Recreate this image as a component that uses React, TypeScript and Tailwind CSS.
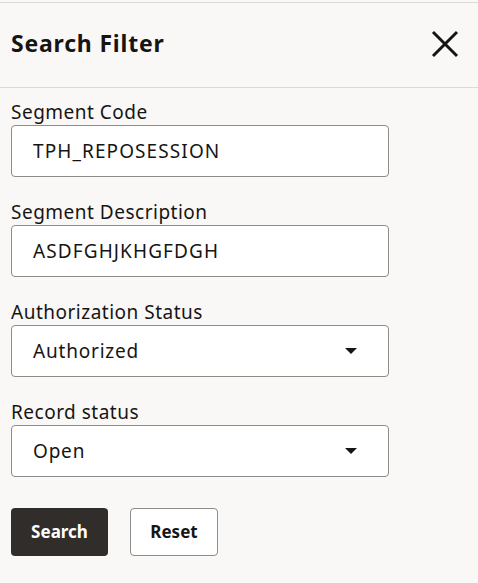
import React, { useState } from 'react';

const font = { fontFamily: '"Noto Sans", "Open Sans", sans-serif' };

const Caret = () => (
  <svg width="14" height="8" viewBox="0 0 14 8" className="text-[#161513]">
    <path d="M1 1h12L7 7z" fill="currentColor" />
  </svg>
);

const TextField: React.FC<{ label: string; value: string }> = ({ label, value }) => (
  <div className="flex flex-col">
    <label className="text-[19px] leading-[24px] tracking-[0.5px] text-[#161513]">{label}</label>
    <div className="mt-[1px] h-[52px] w-[378px] rounded-[4px] border border-[#8e8b88] bg-white flex items-center pl-[21px] text-[19px] tracking-[1.1px] text-[#161513]">
      {value}
    </div>
  </div>
);

const SelectField: React.FC<{ label: string; value: string }> = ({ label, value }) => (
  <div className="flex flex-col">
    <label className="text-[19px] leading-[24px] tracking-[0.5px] text-[#161513]">{label}</label>
    <div className="mt-[1px] h-[52px] w-[378px] rounded-[4px] border border-[#8e8b88] bg-white flex items-center justify-between pl-[21px] pr-[30px] text-[19px] tracking-[0.8px] text-[#161513]">
      <span>{value}</span>
      <Caret />
    </div>
  </div>
);

export default function App() {
  const [open] = useState(true);
  if (!open) return null;

  return (
    <div className="w-[478px] h-[583px] bg-[#f9f8f7] overflow-hidden" style={font}>
      <div className="border-t border-[#dcdad8] mt-[2px]" />
      <div className="h-[85px] flex items-center justify-between pl-[11px] pr-[19px] border-b border-[#dcdad8]">
        <h2 className="text-[23px] font-bold tracking-[0.8px] text-[#161513] mt-[-3px]">Search Filter</h2>
        <svg width="28" height="28" viewBox="0 0 28 28" className="mt-[-2px]">
          <path d="M2 2L26 26M26 2L2 26" stroke="#161513" strokeWidth="3" />
        </svg>
      </div>

      <div className="pl-[11px] pt-[12px] flex flex-col gap-[23px]">
        <TextField label="Segment Code" value="TPH_REPOSESSION" />
        <TextField label="Segment Description" value="ASDFGHJKHGFDGH" />
        <SelectField label="Authorization Status" value="Authorized" />
        <SelectField label="Record status" value="Open" />
      </div>

      <div className="pl-[11px] pt-[31px] flex gap-[22px]">
        <button className="h-[48px] w-[97px] rounded-[4px] bg-[#312d2a] text-white text-[17px] font-bold">Search</button>
        <button className="h-[48px] w-[88px] rounded-[4px] border border-[#8e8b88] bg-white text-[#161513] text-[17px] font-bold">Reset</button>
      </div>
    </div>
  );
}
